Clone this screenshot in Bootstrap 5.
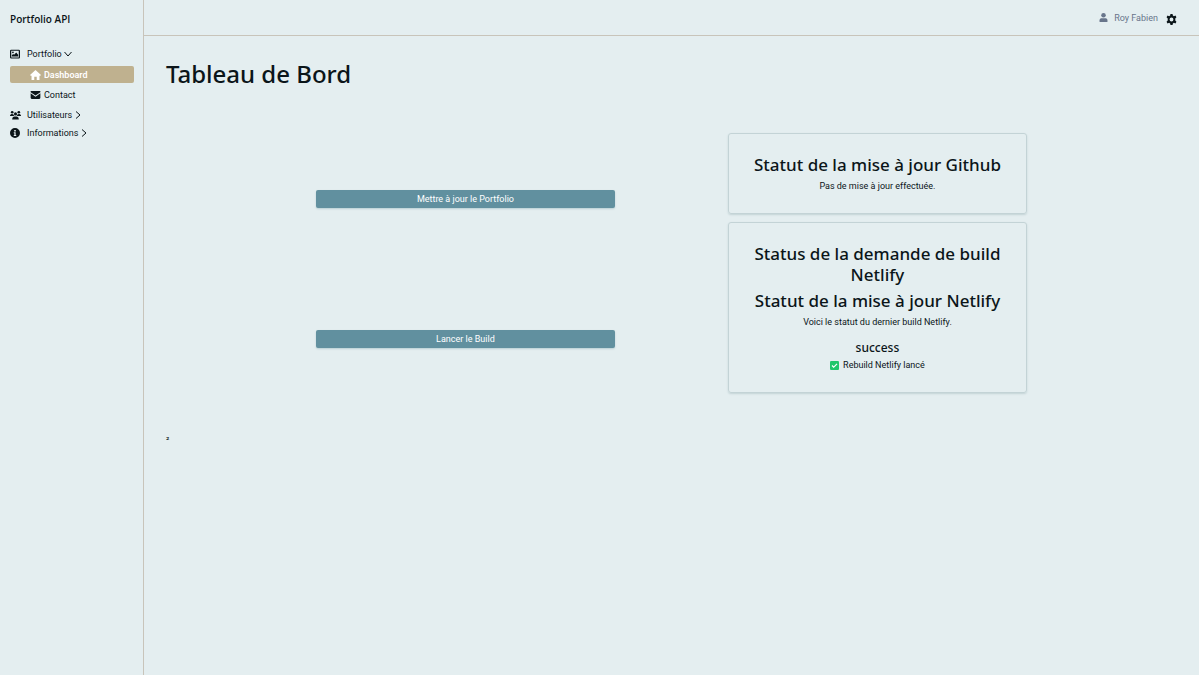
<!DOCTYPE html>
<html lang="fr">
<head>
<meta charset="utf-8">
<meta name="viewport" content="width=device-width, initial-scale=1">
<title>Portfolio API</title>
<link href="https://cdn.jsdelivr.net/npm/bootstrap@5.3.0/dist/css/bootstrap.min.css" rel="stylesheet">
<style>
body{background:#e4eef0;color:#0b1519;font-family:"Segoe UI",Roboto,"Noto Sans",sans-serif;font-size:9px;line-height:14px}
h1,h2,h3{font-family:"Segoe UI","Noto Sans",sans-serif}
a{color:inherit;text-decoration:none}
svg{fill:currentColor;flex:none}
.sidebar{width:12%;border-right:1px solid #c8c4ba;padding:0 9px 0 10px}
.brand{font-family:"Segoe UI","Open Sans",sans-serif;font-size:10px;font-weight:600;height:37px}
.side-link{height:18px}
.side-link .ico{width:11px;margin-right:6px}
.chev{margin-left:2px}
.sub-link{height:17px;margin:3px 0;padding-left:20px;border-radius:2px;gap:3px}
.sub-link.active{background:#bfb18f;color:#fff;font-weight:600}
.topbar{height:36px;border-bottom:1px solid #c8c4ba;padding:0 22px}
.user{color:#68758b;gap:6px}
.gear{background:none;border:0;color:#0b1519}
.content{padding:22px}
h1{font-size:24px;line-height:31px;font-weight:500}
h2{font-size:17px;line-height:21px;font-weight:500;margin-bottom:5px}
h3{font-size:12px;line-height:14px;font-weight:500;margin-bottom:4px}
.board{width:81.5%}
.fit{width:72.5%}
.status p{line-height:13px}
.status .report{margin-bottom:12px}
.btn-act{--bs-btn-color:#fff;--bs-btn-bg:#61909f;--bs-btn-hover-color:#fff;--bs-btn-hover-bg:#507d8c;--bs-btn-font-size:9px;--bs-btn-line-height:12px;--bs-btn-padding-y:3px;--bs-btn-border-width:0px;--bs-btn-border-radius:2px;box-shadow:0 1px 2px #b8cfd4}
.status{--bs-card-bg:transparent;--bs-card-border-color:#c3d3d6;--bs-card-border-radius:3px;--bs-card-color:#0b1519;padding:20px 16px;box-shadow:0 1px 2px #c3d3d6}
</style>
</head>
<body>
<div class="d-flex min-vh-100">
<aside class="sidebar flex-shrink-0">
  <a href="#" class="brand d-flex align-items-center">Portfolio API</a>
  <nav class="pt-2">
    <a href="#" class="side-link d-flex align-items-center"><span class="ico d-flex"><svg width="10" height="10" viewBox="0 0 16 16"><path fill-rule="evenodd" d="M2 1h12a2 2 0 0 1 2 2v10a2 2 0 0 1-2 2H2a2 2 0 0 1-2-2V3a2 2 0 0 1 2-2zm0 1.600v10.800h12V2.600zM3 12V9.800l2-2 1.500 1.500L10 5.500l3 3.500v3z"/><circle cx="4.700" cy="5.200" r="1.400"/></svg></span>Portfolio<svg class="chev" width="8" height="8" viewBox="0 0 16 16"><path d="M1 4l7 8 7-8" fill="none" stroke="currentColor" stroke-width="2"/></svg></a>
    <a href="#" class="sub-link active d-flex align-items-center"><svg width="11" height="10" viewBox="0 0 18 16"><path d="M9 0l9 8-1.300 1.200H15.500V16H11v-5H7v5H2.500V9.200H1.300L0 8z"/></svg>Dashboard</a>
    <a href="#" class="sub-link d-flex align-items-center"><svg width="11" height="8" viewBox="0 0 18 14"><path d="M2 0h14a1.500 1.500 0 0 1 1.500 2L9 8 .5 2A1.500 1.500 0 0 1 2 0zM.5 4L9 10l8.500-6v8a2 2 0 0 1-2 2h-13a2 2 0 0 1-2-2z"/></svg>Contact</a>
    <a href="#" class="side-link d-flex align-items-center"><span class="ico d-flex"><svg width="11" height="10" viewBox="0 0 20 16"><circle cx="4" cy="3" r="2.400"/><circle cx="16" cy="3" r="2.400"/><circle cx="10" cy="6" r="2.800"/><path d="M0 9.500C0 7 2 6 4 6c1 0 2 .4 2.500 1C6.500 8 7 9 8 10H0zM20 9.500C20 7 18 6 16 6c-1 0-2 .4-2.500 1 0 1-.5 2-1.500 3h8zM4 16c0-4 2-5.500 4-5.500h4c2 0 4 1.500 4 5.500z"/></svg></span>Utilisateurs<svg class="chev" width="8" height="8" viewBox="0 0 16 16"><path d="M4 1l8 7-8 7" fill="none" stroke="currentColor" stroke-width="2"/></svg></a>
    <a href="#" class="side-link d-flex align-items-center"><span class="ico d-flex"><svg width="10" height="10" viewBox="0 0 16 16"><path fill-rule="evenodd" d="M8 0a8 8 0 1 1 0 16A8 8 0 0 1 8 0zM6.700 3v2.500h2.600V3zM6 6.800v1.500h1v3H6v1.500h4v-1.500H9V6.800z"/></svg></span>Informations<svg class="chev" width="8" height="8" viewBox="0 0 16 16"><path d="M4 1l8 7-8 7" fill="none" stroke="currentColor" stroke-width="2"/></svg></a>
  </nav>
</aside>
<div class="flex-grow-1">
  <header class="topbar d-flex align-items-center justify-content-end">
    <a href="#" class="user d-flex align-items-center"><svg width="9" height="9" viewBox="0 0 16 16"><circle cx="8" cy="4" r="4"/><path d="M1 16v-3c0-2.500 2-3.500 4-3.500h6c2 0 4 1 4 3.500v3z"/></svg>Roy Fabien</a>
    <button type="button" class="gear d-flex p-0 ms-2 mt-1" aria-label="Paramètres"><svg width="11" height="11" viewBox="0 0 16 16"><path fill-rule="evenodd" d="M6.500 0h3l.5 2.300 1.500.8 2.200-.8 1.500 2.600L13.500 6.500v3l1.700 1.600-1.500 2.600-2.200-.8-1.500.8-.5 2.300h-3L6 13.700l-1.500-.8-2.200.8-1.500-2.600 1.700-1.600v-3L.8 4.900l1.500-2.600 2.200.8L6 2.300zM8 5.200a2.800 2.800 0 1 0 0 5.600 2.800 2.800 0 0 0 0-5.600z"/></svg></button>
  </header>
  <main class="content">
    <h1 class="mb-0">Tableau de Bord</h1>
    <div class="board mx-auto row g-0 pt-4 mt-3 mb-4">
      <div class="col-6 d-flex flex-column align-items-center justify-content-around">
        <button type="button" class="btn btn-act fit">Mettre à jour le Portfolio</button>
        <button type="button" class="btn btn-act fit">Lancer le Build</button>
      </div>
      <div class="col-6 d-flex flex-column align-items-center pt-1 pb-3 text-center">
        <section class="card status fit"><h2>Statut de la mise à jour Github</h2><p class="mb-0">Pas de mise à jour effectuée.</p></section>
        <section class="card status fit mt-2"><h2>Status de la demande de build Netlify</h2><h2>Statut de la mise à jour Netlify</h2><p class="report">Voici le statut du dernier build Netlify.</p><h3>success</h3><p class="mb-0 d-flex align-items-center justify-content-center gap-1"><svg width="9" height="9" viewBox="0 0 16 16"><rect width="16" height="16" rx="2" fill="#1fc66b"/><path d="M3.500 8l3 3 6-6" fill="none" stroke="#fff" stroke-width="2"/></svg>Rebuild Netlify lancé</p></section>
      </div>
    </div>
    <p>²</p>
  </main>
</div>
</div>
<script src="https://cdn.jsdelivr.net/npm/bootstrap@5.3.0/dist/js/bootstrap.bundle.min.js"></script>
</body>
</html>
